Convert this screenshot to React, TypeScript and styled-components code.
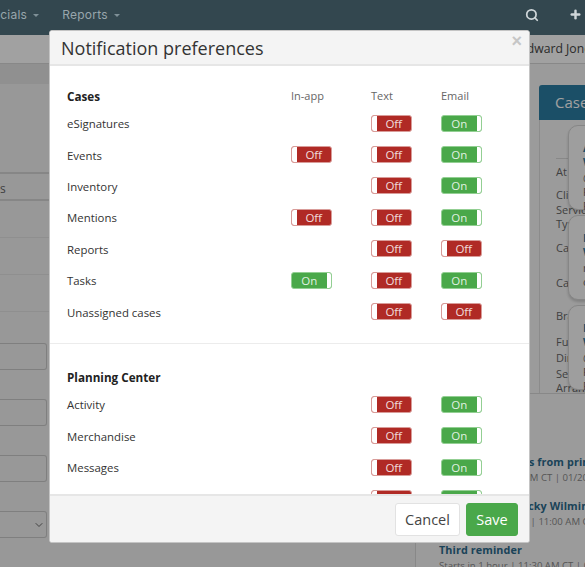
import * as React from 'react';
import styled, { createGlobalStyle } from 'styled-components';
import { Search, Plus, ChevronDown } from 'lucide-react';

const GlobalStyle = createGlobalStyle`
  html, body {
    margin: 0;
    padding: 0;
    width: 585px;
    height: 567px;
    overflow: hidden;
    background: #f1f1f1;
    font-family: 'Open Sans', 'Liberation Sans', sans-serif;
  }
  * {
    box-sizing: border-box;
  }
`;

const Page = styled.div`
  position: relative;
  width: 585px;
  height: 567px;
  overflow: hidden;
  display: flex;
  flex-direction: column;
`;

const TopBar = styled.div`
  position: relative;
  z-index: 2;
  flex: none;
  height: 35px;
  background: #33474f;
  display: flex;
  align-items: center;
  padding: 0 3.5px 6px 0;
`;

const NavItem = styled.div<{ $offset?: number }>`
  display: flex;
  align-items: center;
  gap: 6px;
  margin-left: ${(p) => p.$offset ?? 0}px;
  font-family: 'Inter', sans-serif;
  font-size: 12px;
  letter-spacing: 0.25px;
  color: #98a6ac;
  white-space: nowrap;
`;

const Caret = styled.span`
  width: 0;
  height: 0;
  margin-top: 2px;
  border-left: 3px solid transparent;
  border-right: 3px solid transparent;
  border-top: 3px solid #7f9097;
`;

const BarIcons = styled.div`
  margin-left: auto;
  display: flex;
  align-items: center;
  gap: 30px;
  color: #cfd6d9;
`;

const Main = styled.div`
  flex: 1;
  display: flex;
  min-height: 0;
`;

const LeftColumn = styled.div`
  flex: none;
  width: 415px;
  display: flex;
  flex-direction: column;
`;

const BrandBar = styled.div`
  flex: none;
  height: 29px;
  background: #fff;
  border-bottom: 1px solid #d8d8d8;
`;

const FilterHead = styled.div`
  flex: none;
  height: 20px;
  background: #e4e4e4;
`;

const FilterRow = styled.div<{ $height: number; $strong?: boolean }>`
  flex: none;
  height: ${(p) => p.$height}px;
  border-bottom: ${(p) => (p.$strong ? '2px solid #d4d4d4' : '1px solid #e2e2e2')};
  font-size: 12px;
  padding-top: 6px;
  color: #666;
`;

const FieldStack = styled.div`
  display: flex;
  flex-direction: column;
  gap: 29px;
  margin-top: 31px;
`;

const Field = styled.div`
  width: 47px;
  height: 27px;
  border: 1px solid #c9c9c9;
  border-left: 0;
  border-radius: 0 3px 3px 0;
  color: #6a6a6a;
  display: flex;
  align-items: center;
  justify-content: flex-end;
  padding-right: 1px;
`;

const RightColumn = styled.div`
  flex: none;
  width: 170px;
  display: flex;
  flex-direction: column;
  background: #f6f6f6;
  border-left: 1px solid #d8d8d8;
  overflow: hidden;
`;

const OwnerBar = styled.div`
  flex: none;
  height: 29px;
  padding-left: 104px;
  background: #fff;
  border-bottom: 1px solid #d8d8d8;
  font-size: 12.2px;
  line-height: 27px;
  color: #444;
  white-space: nowrap;
`;

const CasePane = styled.div`
  position: relative;
  flex: none;
  height: 308px;
  margin-top: 21px;
  margin-left: 123px;
  width: 60px;
`;

const CaseTab = styled.div`
  height: 35px;
  width: 60px;
  padding-left: 16px;
  background: #2c7da3;
  border-radius: 3px 0 0 0;
  color: #fff;
  font-size: 15px;
  line-height: 34px;
`;

const CaseFacts = styled.div`
  height: 273px;
  padding: 0 0 0 16px;
  border-left: 1px solid #dcdcdc;
  font-size: 11px;
  color: #666;
  overflow: hidden;
`;

const FactRule = styled.div`
  height: 1px;
  margin-top: 38px;
  background: #d8d8d8;
`;

const Fact = styled.div<{ $top: number }>`
  margin-top: ${(p) => p.$top}px;
  line-height: 14px;
`;

const Popover = styled.div<{ $top: number }>`
  position: absolute;
  left: 29px;
  top: ${(p) => p.$top}px;
  width: 60px;
  height: 85px;
  padding: 15px 0 0 14px;
  background: #fbfbfb;
  border: 1px solid #d4d4d4;
  border-radius: 10px 0 0 10px;
  box-shadow: 0 2px 3px rgba(0, 0, 0, 0.18);
  font-size: 11px;
  line-height: 14px;
  color: #666;
`;

const PopoverTitle = styled.div`
  font-weight: 700;
  line-height: 13.5px;
  color: #2c7da3;
`;

const PopoverMeta = styled.div`
  margin-top: 3px;
`;

const ReminderList = styled.div`
  flex: 1;
  border-top: 1px solid #d8d8d8;
  padding: 60px 0 0 23px;
`;

const Reminder = styled.div`
  height: 44px;
  white-space: nowrap;
`;

const ReminderTitle = styled.div`
  font-size: 10.8px;
  font-weight: 700;
  letter-spacing: 0.1px;
  line-height: 16px;
  color: #2c6a8c;
`;

const ReminderMeta = styled.div`
  font-size: 9.6px;
  line-height: 16px;
  color: #888;
`;

const Overlay = styled.div`
  position: absolute;
  inset: 0;
  background: rgba(0, 0, 0, 0.37);
`;

const Modal = styled.div`
  position: absolute;
  z-index: 3;
  left: 49px;
  top: 30px;
  width: 481px;
  height: 513px;
  display: flex;
  flex-direction: column;
  background: #fff;
  border: 1px solid #c4c4c4;
  border-radius: 3px;
  overflow: hidden;
`;

const ModalHeader = styled.div`
  flex: none;
  height: 35px;
  display: flex;
  align-items: center;
  padding: 0 7px 0 11px;
  background: #f4f4f4;
  border-bottom: 2px solid #e6e6e6;
`;

const ModalTitle = styled.h1`
  margin: 0;
  font-size: 18px;
  font-weight: 400;
  color: #333;
`;

const CloseMark = styled.span`
  margin-left: auto;
  margin-bottom: 13px;
  font-family: 'Liberation Sans', sans-serif;
  font-size: 18px;
  font-weight: 700;
  line-height: 18px;
  color: #c6c6c6;
`;

const ModalBody = styled.div`
  flex: 1;
  min-height: 0;
  overflow: hidden;
`;

const Section = styled.section<{ $top: number; $divided?: boolean }>`
  padding: ${(p) => p.$top}px 0 16px 17px;
  border-bottom: ${(p) => (p.$divided ? '1px solid #ececec' : '0')};
`;

const Row = styled.div`
  display: grid;
  grid-template-columns: 224px 80px 70px 41px;
  align-items: center;
  height: 31.4px;
  font-size: 11.4px;
  color: #333;
`;

const HeadRow = styled(Row)`
  height: 25.5px;
`;

const RowName = styled.span`
  padding-top: 1px;
`;

const GroupName = styled.div`
  padding-top: 2px;
  font-size: 11.7px;
  font-weight: 700;
  color: #222;
`;

const ColumnName = styled.div`
  padding-top: 2px;
  font-size: 11px;
  color: #666;
`;

const ToggleShell = styled.div<{ $on: boolean }>`
  width: 41px;
  height: 17px;
  display: flex;
  flex-direction: ${(p) => (p.$on ? 'row-reverse' : 'row')};
  background: ${(p) => (p.$on ? '#4aa84a' : '#b02a25')};
  border: 1px solid ${(p) => (p.$on ? '#93cf93' : '#d99c99')};
  border-radius: 3px;
  color: rgba(255, 255, 255, 0.85);
  font-size: 11.5px;
  line-height: 15px;
  overflow: hidden;
`;

const ToggleKnob = styled.span`
  flex: none;
  width: 4.5px;
  background: #fff;
`;

const ToggleLabel = styled.span`
  flex: 1;
  text-align: center;
`;

const ModalFooter = styled.div`
  flex: none;
  height: 48px;
  display: flex;
  align-items: center;
  justify-content: flex-end;
  gap: 6px;
  padding-right: 11px;
  background: #f4f4f4;
  border-top: 2px solid #e6e6e6;
`;

const FooterButton = styled.button<{ $primary?: boolean }>`
  height: 33px;
  width: ${(p) => (p.$primary ? 52 : 65)}px;
  padding: 0;
  font-family: inherit;
  font-size: 14.5px;
  color: ${(p) => (p.$primary ? '#fff' : '#444')};
  background: ${(p) => (p.$primary ? '#4aa84a' : '#fff')};
  border: 1px solid ${(p) => (p.$primary ? '#4aa84a' : '#e2e2e2')};
  border-radius: 3px;
`;

const Toggle = ({ on }: { on: boolean }) => (
  <ToggleShell $on={on}>
    <ToggleKnob />
    <ToggleLabel>{on ? 'On' : 'Off'}</ToggleLabel>
  </ToggleShell>
);

type Pref = { name: string; inApp?: boolean; text: boolean; email: boolean };

const cases: Pref[] = [
  { name: 'eSignatures', text: false, email: true },
  { name: 'Events', inApp: false, text: false, email: true },
  { name: 'Inventory', text: false, email: true },
  { name: 'Mentions', inApp: false, text: false, email: true },
  { name: 'Reports', text: false, email: false },
  { name: 'Tasks', inApp: true, text: false, email: true },
  { name: 'Unassigned cases', text: false, email: false },
];

const planning: Pref[] = [
  { name: 'Activity', text: false, email: true },
  { name: 'Merchandise', text: false, email: true },
  { name: 'Messages', text: false, email: true },
  { name: 'Obituaries', text: false, email: true },
];

const PrefRow = ({ pref }: { pref: Pref }) => (
  <Row>
    <RowName>{pref.name}</RowName>
    <span>{pref.inApp !== undefined && <Toggle on={pref.inApp} />}</span>
    <Toggle on={pref.text} />
    <Toggle on={pref.email} />
  </Row>
);

const App = () => {
  return (
    <Page>
      <GlobalStyle />
      <TopBar>
        <NavItem $offset={-32}>
          Financials <Caret />
        </NavItem>
        <NavItem $offset={23}>
          Reports <Caret />
        </NavItem>
        <BarIcons>
          <Search size={14} strokeWidth={3} />
          <Plus size={13} strokeWidth={4.5} />
        </BarIcons>
      </TopBar>
      <Main>
        <LeftColumn>
          <BrandBar />
          <FilterHead />
          <FilterRow $height={90} $strong />
          <FilterRow $height={27} $strong>
            s
          </FilterRow>
          <FilterRow $height={37} />
          <FilterRow $height={37} />
          <FilterRow $height={37} />
          <FieldStack>
            <Field />
            <Field />
            <Field />
            <Field>
              <ChevronDown size={12} />
            </Field>
            <Field />
          </FieldStack>
        </LeftColumn>
        <RightColumn>
          <OwnerBar>Edward Jones</OwnerBar>
          <CasePane>
            <CaseTab>Cases</CaseTab>
            <CaseFacts>
              <FactRule />
              <Fact $top={6}>At</Fact>
              <Fact $top={9}>Client</Fact>
              <Fact $top={1}>Service</Fact>
              <Fact $top={0}>Type</Fact>
              <Fact $top={10}>Case</Fact>
              <Fact $top={21}>Case</Fact>
              <Fact $top={19}>Branch</Fact>
              <Fact $top={12}>Funeral</Fact>
              <Fact $top={2}>Director</Fact>
              <Fact $top={2}>Service</Fact>
              <Fact $top={0}>Arrangement</Fact>
            </CaseFacts>
            <Popover $top={40}>
              <PopoverTitle>Anne</PopoverTitle>
              <PopoverTitle>Wood</PopoverTitle>
              <PopoverMeta>@ Funeral</PopoverMeta>
              <div>Pending</div>
            </Popover>
            <Popover $top={130}>
              <PopoverTitle>Bill</PopoverTitle>
              <PopoverTitle>Wade</PopoverTitle>
              <PopoverMeta>mentioned</PopoverMeta>
              <div>on case</div>
            </Popover>
            <Popover $top={220}>
              <PopoverTitle>Dale</PopoverTitle>
              <PopoverTitle>West</PopoverTitle>
              <PopoverMeta>@ Funeral</PopoverMeta>
              <div>Pending</div>
            </Popover>
          </CasePane>
          <ReminderList>
            <Reminder>
              <ReminderTitle>Pick up programs from printer</ReminderTitle>
              <ReminderMeta>Starts now | 10:30 AM CT | 01/20/20</ReminderMeta>
            </Reminder>
            <Reminder>
              <ReminderTitle>Meeting with Becky Wilmington</ReminderTitle>
              <ReminderMeta>Starts in 30 minutes | 11:00 AM CT</ReminderMeta>
            </Reminder>
            <Reminder>
              <ReminderTitle>Third reminder</ReminderTitle>
              <ReminderMeta>Starts in 1 hour | 11:30 AM CT | 01/20/20</ReminderMeta>
            </Reminder>
          </ReminderList>
        </RightColumn>
      </Main>
      <Overlay />
      <Modal>
        <ModalHeader>
          <ModalTitle>Notification preferences</ModalTitle>
          <CloseMark>×</CloseMark>
        </ModalHeader>
        <ModalBody>
          <Section $top={16} $divided>
            <HeadRow>
              <GroupName>Cases</GroupName>
              <ColumnName>In-app</ColumnName>
              <ColumnName>Text</ColumnName>
              <ColumnName>Email</ColumnName>
            </HeadRow>
            {cases.map((pref) => (
              <PrefRow key={pref.name} pref={pref} />
            ))}
          </Section>
          <Section $top={19}>
            <HeadRow>
              <GroupName>Planning Center</GroupName>
            </HeadRow>
            {planning.map((pref) => (
              <PrefRow key={pref.name} pref={pref} />
            ))}
          </Section>
        </ModalBody>
        <ModalFooter>
          <FooterButton>Cancel</FooterButton>
          <FooterButton $primary>Save</FooterButton>
        </ModalFooter>
      </Modal>
    </Page>
  );
};

export default App;
